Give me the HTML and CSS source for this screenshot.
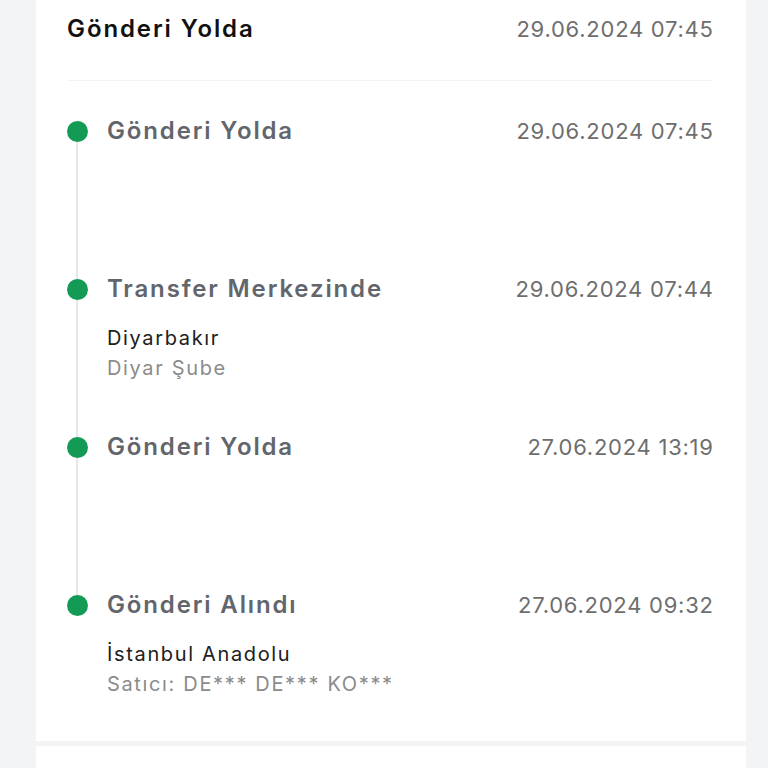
FILE: index.html
```html
<!DOCTYPE html>
<html lang="tr">
<head>
<meta charset="utf-8">
<title>Gönderi Takibi</title>
<link rel="stylesheet" href="styles.css">
</head>
<body>
<div class="page">
  <section class="card">
    <header class="card-head">
      <h2 class="head-title">Gönderi Yolda</h2>
      <span class="head-date">29.06.2024 07:45</span>
    </header>
    <ol class="timeline">
      <li class="item">
        <span class="dot"></span>
        <div class="body">
          <div class="title">Gönderi Yolda</div>
        </div>
        <span class="date">29.06.2024 07:45</span>
      </li>
      <li class="item">
        <span class="dot"></span>
        <div class="body">
          <div class="title">Transfer Merkezinde</div>
          <div class="subs">
            <div class="sub-main">Diyarbakır</div>
            <div class="sub-muted">Diyar Şube</div>
          </div>
        </div>
        <span class="date">29.06.2024 07:44</span>
      </li>
      <li class="item">
        <span class="dot"></span>
        <div class="body">
          <div class="title">Gönderi Yolda</div>
        </div>
        <span class="date">27.06.2024 13:19</span>
      </li>
      <li class="item">
        <span class="dot"></span>
        <div class="body">
          <div class="title">Gönderi Alındı</div>
          <div class="subs">
            <div class="sub-main">İstanbul Anadolu</div>
            <div class="sub-muted">Satıcı: DE*** DE*** KO***</div>
          </div>
        </div>
        <span class="date">27.06.2024 09:32</span>
      </li>
    </ol>
  </section>
  <section class="card card-next"></section>
</div>
</body>
</html>
```

FILE: styles.css
```css
* { box-sizing: border-box; }
html, body { margin: 0; padding: 0; }
body {
  background: #f3f4f6;
  font-family: "Inter", "Noto Sans", sans-serif;
  height: 768px;
  overflow: hidden;
}
.page {
  display: flex;
  flex-direction: column;
  gap: 5px;
  padding: 0 22px 0 36px;
}
.card {
  background: #ffffff;
  padding: 14px 33px 42px 31px;
}
.card-next {
  height: 60px;
  padding: 0;
}
.card-head {
  display: flex;
  justify-content: space-between;
  align-items: center;
  padding-bottom: 36px;
  border-bottom: 1px solid #f3f3f3;
}
.head-title {
  margin: 0;
  font-size: 24px;
  line-height: 30px;
  font-weight: 600;
  letter-spacing: 1.9px;
  color: #111111;
}
.head-date,
.date {
  font-size: 22px;
  line-height: 30px;
  letter-spacing: 0.75px;
  color: #6e6e6e;
  margin-right: -0.7px;
}
.timeline {
  list-style: none;
  margin: 35px 0 0;
  padding: 0;
}
.item {
  position: relative;
  display: grid;
  grid-template-columns: 20px 1fr auto;
  column-gap: 20px;
  align-items: start;
  min-height: 158px;
}
.item:last-child { min-height: 0; }
.item:not(:last-child)::after {
  content: "";
  position: absolute;
  left: 9px;
  top: 15px;
  width: 2px;
  height: 158px;
  background: #e6e6e6;
}
.dot {
  position: relative;
  z-index: 1;
  width: 21px;
  height: 21px;
  margin-top: 5px;
  margin-left: -0.5px;
  border-radius: 50%;
  background: #139a55;
}
.title {
  font-size: 24px;
  line-height: 30px;
  font-weight: 600;
  letter-spacing: 1.85px;
  color: #62666c;
}
.subs {
  margin-top: 19px;
  font-size: 20px;
  line-height: 30px;
  letter-spacing: 1.65px;
}
.sub-main { color: #202020; }
.sub-muted { color: #8b8b8b; }
```
